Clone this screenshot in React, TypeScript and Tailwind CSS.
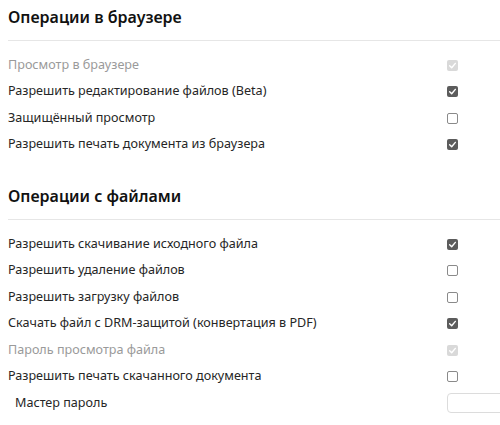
import React from 'react'

type Row = { label: string; state: 'on' | 'off' | 'disabled'; muted?: boolean }

const browserRows: Row[] = [
  { label: 'Просмотр в браузере', state: 'disabled', muted: true },
  { label: 'Разрешить редактирование файлов (Beta)', state: 'on' },
  { label: 'Защищённый просмотр', state: 'off' },
  { label: 'Разрешить печать документа из браузера', state: 'on' },
]

const fileRows: Row[] = [
  { label: 'Разрешить скачивание исходного файла', state: 'on' },
  { label: 'Разрешить удаление файлов', state: 'off' },
  { label: 'Разрешить загрузку файлов', state: 'off' },
  { label: 'Скачать файл с DRM-защитой (конвертация в PDF)', state: 'on' },
  { label: 'Пароль просмотра файла', state: 'disabled', muted: true },
  { label: 'Разрешить печать скачанного документа', state: 'off' },
]

function Check({ state }: { state: Row['state'] }) {
  if (state === 'off') {
    return <span className="block h-[11px] w-[11px] rounded-[2px] border border-[#8a8a8a] bg-white" />
  }
  const bg = state === 'on' ? 'bg-[#5c5c5c]' : 'bg-[#d9d9d9]'
  return (
    <span className={`flex h-[11px] w-[11px] items-center justify-center rounded-[2px] ${bg}`}>
      <svg viewBox="0 0 12 12" className="h-[9px] w-[9px]" fill="none">
        <path d="M2.2 6.3 4.9 8.9 9.8 3.2" stroke="white" strokeWidth="1.9" strokeLinecap="round" strokeLinejoin="round" />
      </svg>
    </span>
  )
}

function Section({ title, rows }: { title: string; rows: Row[] }) {
  return (
    <section>
      <h2 className="pl-2 text-[16px] font-semibold leading-[22px] text-[#111]">{title}</h2>
      <div className="mt-3 ml-2 border-t border-[#e6e6e6]" />
      <div className="mt-[11px]">
        {rows.map((r) => (
          <div key={r.label} className="flex h-[26.5px] items-center pl-2">
            <span className={`flex-1 text-[12.6px] ${r.muted ? 'text-[#9a9a9a]' : 'text-[#262626]'}`}>{r.label}</span>
            <span className="w-[53px]">
              <Check state={r.state} />
            </span>
          </div>
        ))}
      </div>
    </section>
  )
}

export default function App() {
  return (
    <div className="h-[425px] w-[500px] overflow-hidden bg-white pt-[6px] font-['Noto_Sans',sans-serif]">
      <Section title="Операции в браузере" rows={browserRows} />
      <div className="mt-[27px]">
        <Section title="Операции с файлами" rows={fileRows} />
      </div>
      <div className="flex h-[26.5px] items-center pl-[15px]">
        <span className="flex-1 text-[12.6px] text-[#262626]">Мастер пароль</span>
        <input className="h-[20px] w-[60px] shrink-0 -mr-[7px] rounded-[4px] border border-[#dcdcdc] bg-white outline-none" />
      </div>
    </div>
  )
}
